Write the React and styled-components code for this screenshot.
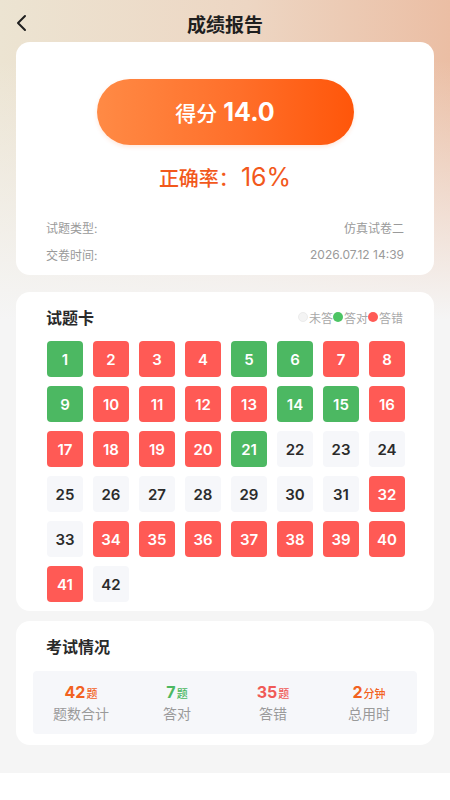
import React from 'react';
import styled, { createGlobalStyle } from 'styled-components';

const GlobalStyle = createGlobalStyle`
  html, body {
    margin: 0;
    padding: 0;
    background: #ffffff;
  }
  body {
    font-family: "Inter", "Noto Sans CJK SC", sans-serif;
    -webkit-font-smoothing: antialiased;
  }
  * { box-sizing: border-box; }
`;

// 0 = unanswered, 1 = right, 2 = wrong
const answers = [
  1, 2, 2, 2, 1, 1, 2, 2,
  1, 2, 2, 2, 2, 1, 1, 2,
  2, 2, 2, 2, 1, 0, 0, 0,
  0, 0, 0, 0, 0, 0, 0, 2,
  0, 2, 2, 2, 2, 2, 2, 2,
  2, 0
];

const stats = [
  { value: '42', unit: '题', label: '题数合计', color: '#f2621f' },
  { value: '7', unit: '题', label: '答对', color: '#4cb861' },
  { value: '35', unit: '题', label: '答错', color: '#f05a57' },
  { value: '2', unit: '分钟', label: '总用时', color: '#f2621f' }
];

const Page = styled.div`
  position: relative;
  width: 450px;
  min-height: 773px;
  background:
    linear-gradient(180deg, rgba(245,245,245,0) 0px, rgba(245,245,245,0) 60px, #f5f5f5 320px),
    linear-gradient(90deg, #ece4d2 0%, #edd6c3 55%, #ebbea4 100%);
  padding: 0 16px 26px;
`;

const Header = styled.div`
  position: relative;
  height: 42px;
  display: flex;
  align-items: center;
  justify-content: center;
`;

const BackButton = styled.div`
  position: absolute;
  left: -4px;
  top: 13px;
  width: 20px;
  height: 20px;
  display: flex;
  align-items: center;
  justify-content: center;
`;

const Title = styled.div`
  font-size: 19px;
  font-weight: 700;
  color: #1f1f1f;
  margin-top: 4px;
`;

const Card = styled.div`
  background: #ffffff;
  border-radius: 14px;
  padding: ${p => p.$pad};
  margin-top: ${p => p.$top}px;
`;

const ScorePill = styled.div`
  width: 257px;
  height: 66px;
  margin: 0 auto;
  border-radius: 33px;
  background: linear-gradient(90deg, #ff8a45 0%, #ff6f2a 55%, #ff560a 100%);
  box-shadow: 0 2px 4px rgba(255, 100, 30, 0.15);
  display: flex;
  align-items: center;
  justify-content: center;
  gap: 6px;
  color: #ffffff;
`;

const ScoreLabel = styled.span`
  font-size: 21px;
  font-weight: 500;
`;

const ScoreValue = styled.span`
  font-size: 25px;
  font-weight: 700;
`;

const Rate = styled.div`
  margin-top: 17px;
  text-align: center;
  color: #f2581b;
  font-size: 20px;
  font-weight: 500;
  display: flex;
  justify-content: center;
  align-items: baseline;
`;

const RateValue = styled.span`
  font-size: 25px;
  font-weight: 400;
  margin-left: 2px;
`;

const InfoList = styled.div`
  margin-top: 26px;
  display: flex;
  flex-direction: column;
  gap: 9px;
`;

const InfoRow = styled.div`
  display: flex;
  justify-content: space-between;
  align-items: center;
  font-size: 12px;
  color: #9a9a9a;
  height: 18px;
`;

const SectionHead = styled.div`
  display: flex;
  justify-content: space-between;
  align-items: center;
  height: 22px;
`;

const SectionTitle = styled.div`
  font-size: 16px;
  font-weight: 700;
  color: #2a2a2a;
`;

const Legend = styled.div`
  display: flex;
  align-items: center;
  font-size: 12px;
  color: #a8a8a8;
  margin-right: 1px;
`;

const Dot = styled.span`
  width: 10px;
  height: 10px;
  border-radius: 50%;
  background: ${p => p.$color};
  border: ${p => (p.$outline ? '1px solid #ececec' : 'none')};
  margin-right: 1px;
`;

const Grid = styled.div`
  margin-top: 13px;
  display: grid;
  grid-template-columns: repeat(8, 36px);
  column-gap: 10px;
  row-gap: 9px;
  margin-left: 1px;
`;

const cellBg = ['#f6f7fa', '#4cb862', '#ff5a55'];

const Cell = styled.div`
  width: 36px;
  height: 36px;
  border-radius: 4px;
  background: ${p => cellBg[p.$status]};
  color: ${p => (p.$status === 0 ? '#2b2b2b' : '#ffffff')};
  font-size: 15px;
  font-weight: 600;
  display: flex;
  align-items: center;
  justify-content: center;
`;

const StatTitle = styled(SectionTitle)`
  margin-left: 13px;
  line-height: 22px;
`;

const StatBox = styled.div`
  margin-top: 13px;
  background: #f6f7fa;
  border-radius: 4px;
  height: 63px;
  display: grid;
  grid-template-columns: repeat(4, 1fr);
  align-items: center;
`;

const Stat = styled.div`
  display: flex;
  flex-direction: column;
  align-items: center;
  gap: 1px;
`;

const StatValue = styled.div`
  color: ${p => p.$color};
  font-size: 16px;
  font-weight: 700;
  line-height: 19px;
`;

const StatUnit = styled.span`
  font-size: 11px;
  font-weight: 500;
  margin-left: 1px;
`;

const StatLabel = styled.div`
  font-size: 14px;
  color: #9a9a9a;
  line-height: 18px;
`;

export default function App() {
  return (
    <>
      <GlobalStyle />
      <Page>
        <Header>
          <BackButton>
            <svg width="14" height="18" viewBox="0 0 14 18" fill="none">
              <polyline points="10,2 3,9 10,16" stroke="#1f1f1f" strokeWidth="2" strokeLinecap="round" strokeLinejoin="round" />
            </svg>
          </BackButton>
          <Title>成绩报告</Title>
        </Header>

        <Card $pad="37px 30px 12px" $top={0}>
          <ScorePill>
            <ScoreLabel>得分</ScoreLabel>
            <ScoreValue>14.0</ScoreValue>
          </ScorePill>
          <Rate>
            正确率：<RateValue>16%</RateValue>
          </Rate>
          <InfoList>
            <InfoRow>
              <span>试题类型:</span>
              <span>仿真试卷二</span>
            </InfoRow>
            <InfoRow>
              <span>交卷时间:</span>
              <span>2026.07.12 14:39</span>
            </InfoRow>
          </InfoList>
        </Card>

        <Card $pad="14px 30px 9px" $top={17}>
          <SectionHead>
            <SectionTitle>试题卡</SectionTitle>
            <Legend>
              <Dot $color="#f4f4f4" $outline />未答
              <Dot $color="#4cc464" />答对
              <Dot $color="#ff5a55" />答错
            </Legend>
          </SectionHead>
          <Grid>
            {answers.map((s, i) => (
              <Cell key={i} $status={s}>{i + 1}</Cell>
            ))}
          </Grid>
        </Card>

        <Card $pad="15px 17px 11px" $top={10}>
          <StatTitle>考试情况</StatTitle>
          <StatBox>
            {stats.map(s => (
              <Stat key={s.label}>
                <StatValue $color={s.color}>
                  {s.value}<StatUnit>{s.unit}</StatUnit>
                </StatValue>
                <StatLabel>{s.label}</StatLabel>
              </Stat>
            ))}
          </StatBox>
        </Card>
      </Page>
    </>
  );
}
